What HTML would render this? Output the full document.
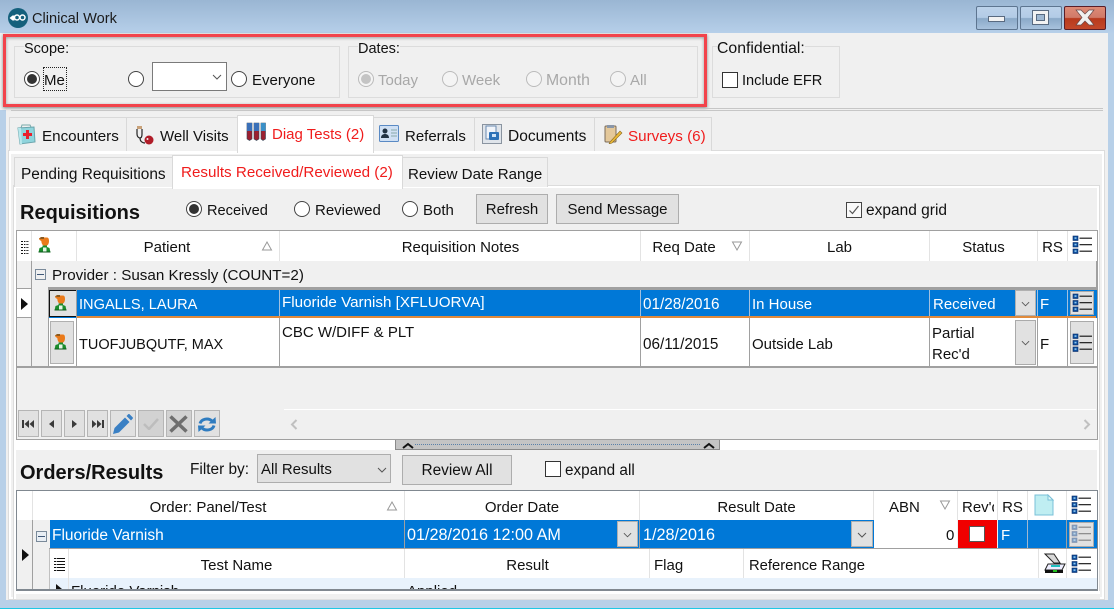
<!DOCTYPE html>
<html><head><meta charset="utf-8"><title>Clinical Work</title>
<style>
html,body{margin:0;padding:0}
body{width:1114px;height:609px;overflow:hidden;position:relative;background:#b8d0e8;font-family:"Liberation Sans",sans-serif;font-size:15px;color:#111}
.a,.t,svg.i{position:absolute;box-sizing:border-box}
.t{white-space:nowrap;line-height:20px;height:20px;margin-top:2px}
.c{text-align:center}
.w{color:#fff}.r{color:#f01c1c}.d{color:#a8a8a8}
.b{font-weight:bold;font-size:20px;color:#111}
.gb{border:1px solid #dcdcdc}
.rd{position:absolute;width:16px;height:16px;border:1px solid #444;border-radius:50%;background:#fff;box-sizing:border-box}
.rd.on::after{content:"";position:absolute;left:2px;top:2px;width:10px;height:10px;border-radius:50%;background:#333}
.rd.dis{border-color:#bbb;background:#f4f4f4}
.rd.dis.on::after{background:#c4c4c4}
.cb{position:absolute;width:16px;height:16px;border:1px solid #333;background:#fff;box-sizing:border-box}
.tab{position:absolute;box-sizing:border-box;background:#f0f0f0;border:1px solid #d9d9d9;border-bottom:none}
.tab.s{background:#fff;border-color:#d9d9d9}
.btn{position:absolute;box-sizing:border-box;background:#e1e1e1;border:1px solid #adadad}
.v{position:absolute;width:1px;background:#e3e3e3}
.vg{position:absolute;width:1px;background:#a0a0a0}
.h{position:absolute;height:1px;background:#a0a0a0}
.nav{position:absolute;top:410px;height:27px;box-sizing:border-box;background:#e1e1e1;border:1px solid #b5b5b5}
</style></head><body>
<svg width="0" height="0" style="position:absolute">
<defs>
<symbol id="p" viewBox="0 0 14 17"><path d="M3 1.500h6.500c1.500 0 2 1.500 2 3.500 0 2.500-1 4.500-2.500 4.500H6.500C5 9.500 4 7.500 3.800 5 2.500 4.500 1.500 3.500 1.500 2.500z" fill="#ea7a1a"/><path d="M1.500 2.500L3.500 1h3v2H4z" fill="#8a5a20"/><path d="M5 9.500h4.500V11l2.500 1 1 4.500H1L2 12l3-1z" fill="#1a8c2c"/><path d="M5.500 11.500h3.500v4H5.500z" fill="#e6f4e6"/><path d="M1 15.500h12v1H1z" fill="#0e5a1c"/></symbol>
<symbol id="l" viewBox="0 0 20 20"><g fill="#0d4f9e" stroke="#0a2c66" stroke-width=".6"><rect x="1" y="1" width="5" height="4.500"/><rect x="1" y="7.500" width="5" height="4.500"/><rect x="1" y="14" width="5" height="4.500"/></g><g fill="#8ec8f0"><rect x="2.500" y="2.300" width="2" height="1.600"/><rect x="2.500" y="8.800" width="2" height="1.600"/><rect x="2.500" y="15.300" width="2" height="1.600"/></g><path d="M7.500 3.200H20M7.500 9.700H20M7.500 16.200H20" stroke="#111" stroke-width="1.100"/></symbol>
<symbol id="ch" viewBox="0 0 10 6"><path d="M1 1l4 4 4-4" fill="none" stroke="#555" stroke-width="1"/></symbol>
</defs></svg>

<!-- title bar -->
<div class="a" style="left:0;top:0;width:1114px;height:33px;background:linear-gradient(#9ab6d3,#b6cfe9)"></div>
<svg class="i" style="left:8px;top:8px" width="20" height="20" viewBox="0 0 20 20"><circle cx="10" cy="10" r="10" fill="#14607c"/><path d="M1.500 10l3-2.500h2v5h-2z" fill="#fff"/><circle cx="9" cy="9.500" r="2.500" fill="none" stroke="#fff" stroke-width="1.500"/><circle cx="14.500" cy="9.500" r="2.500" fill="none" stroke="#fff" stroke-width="1.500"/></svg>
<div class="t" style="left:32px;top:7px;color:#1b1b1b;font-size:14.600px">Clinical Work</div>
<div class="a" style="left:976px;top:6px;width:42px;height:24px;border:1px solid #5d7590;border-radius:2px;background:linear-gradient(#bcd2ea 0,#b2cbe6 48%,#8aa9c8 52%,#a8c2dd 100%)"></div>
<div class="a" style="left:988px;top:16px;width:17px;height:6px;background:#f2f2f2;border:1px solid #596a80"></div>
<div class="a" style="left:1020px;top:6px;width:42px;height:24px;border:1px solid #5d7590;border-radius:2px;background:linear-gradient(#bcd2ea 0,#b2cbe6 48%,#8aa9c8 52%,#a8c2dd 100%)"></div>
<div class="a" style="left:1032px;top:10px;width:17px;height:15px;background:#f2f2f2;border:1px solid #596a80"></div>
<div class="a" style="left:1036px;top:14px;width:9px;height:7px;background:#9fb8d2;border:1px solid #596a80"></div>
<div class="a" style="left:1064px;top:6px;width:42px;height:24px;border:1px solid #5a1e28;border-radius:2px;background:linear-gradient(#de8a76 0,#d07a68 48%,#b8391c 52%,#c2482a 100%)"></div>
<svg class="i" style="left:1075px;top:9px" width="20" height="17" viewBox="0 0 20 17"><path d="M1 1h5l4 4 4-4h5l-6 7.500 6 7.500h-5l-4-4-4 4H1l6-7.500z" fill="#f0f0f0" stroke="#6a4a4a" stroke-width=".7"/></svg>

<!-- main surface -->
<div class="a" style="left:0;top:33px;width:1108px;height:567px;background:#f0f0f0"></div>
<div class="a" style="left:0;top:110px;width:6px;height:490px;background:#b8d0e8"></div>
<div class="a" style="left:0;top:608px;width:1114px;height:1px;background:#1fc8e4"></div>

<!-- scope -->
<div class="a gb" style="left:14px;top:46px;width:326px;height:52px"></div>
<div class="t" style="left:24px;top:37px;background:#f0f0f0;font-size:14.500px;height:18px">Scope:</div>
<div class="rd on" style="left:24px;top:71px"></div>
<div class="a" style="left:43px;top:67px;width:24px;height:24px;border:1px dotted #222"></div>
<div class="t" style="left:44px;top:69px">Me</div>
<div class="rd" style="left:128px;top:71px"></div>
<div class="a" style="left:152px;top:62px;width:75px;height:29px;border:1px solid #7a7a7a;background:#fff"></div>
<svg class="i" style="left:212px;top:74px" width="10" height="6"><use href="#ch"/></svg>
<div class="rd" style="left:231px;top:71px"></div>
<div class="t" style="left:252px;top:69px">Everyone</div>

<!-- dates -->
<div class="a gb" style="left:348px;top:46px;width:350px;height:52px"></div>
<div class="t" style="left:358px;top:37px;background:#f0f0f0;font-size:14.500px;height:18px">Dates:</div>
<div class="rd dis on" style="left:358px;top:71px"></div><div class="t d" style="left:378px;top:69px">Today</div>
<div class="rd dis" style="left:442px;top:71px"></div><div class="t d" style="left:462px;top:69px">Week</div>
<div class="rd dis" style="left:526px;top:71px"></div><div class="t d" style="left:546px;top:69px;font-size:15.800px">Month</div>
<div class="rd dis" style="left:610px;top:71px"></div><div class="t d" style="left:630px;top:69px">All</div>

<!-- red annotation -->
<div class="a" style="left:3px;top:34px;width:704px;height:73px;border:3px solid #f2434b;box-shadow:0 1px 3px rgba(0,0,0,.45),inset 0 1px 3px rgba(0,0,0,.35)"></div>

<!-- confidential -->
<div class="a gb" style="left:712px;top:46px;width:128px;height:52px"></div>
<div class="t" style="left:717px;top:37px;background:#f0f0f0;font-size:15.800px;height:18px">Confidential:</div>
<div class="cb" style="left:722px;top:72px"></div>
<div class="t" style="left:742px;top:69px;font-size:14.600px">Include EFR</div>

<div class="a" style="left:11px;top:108px;width:1092px;height:3px;border:1px solid #c6c6c6;border-left:none;border-right:none"></div>

<!-- outer panel -->
<div class="a" style="left:8px;top:150px;width:1097px;height:450px;border:3px solid #fff;border-top-width:4px;outline:1px solid #dcdcdc;outline-offset:-1px;background:#f0f0f0"></div>

<!-- outer tabs -->
<div class="tab" style="left:9px;top:117px;width:118px;height:34px"></div>
<div class="tab" style="left:126px;top:117px;width:112px;height:34px"></div>
<div class="tab s" style="left:237px;top:115px;width:137px;height:38px"></div>
<div class="tab" style="left:373px;top:117px;width:102px;height:34px"></div>
<div class="tab" style="left:474px;top:117px;width:121px;height:34px"></div>
<div class="tab" style="left:594px;top:117px;width:118px;height:34px"></div>

<svg class="i" style="left:17px;top:124px" width="19" height="21" viewBox="0 0 19 21"><path d="M4 4l1-3h8l1 2" fill="none" stroke="#7aa" stroke-width="1"/><path d="M1 4l16-1 1 15L3 20z" fill="#8fd4dc" stroke="#6aa4ac"/><path d="M1 4l3 0 1 16H3z" fill="#b8e8ec"/><path d="M9 6h3v3h3v3h-3v3H9v-3H6V9h3z" fill="#e8202c"/></svg>
<div class="t" style="left:42px;top:125px;font-size:15.200px">Encounters</div>
<svg class="i" style="left:134px;top:125px" width="21" height="20" viewBox="0 0 21 20"><path d="M3 4v5c0 3 2 4 3 4s2-1 2-4V4M6 13c0 3 2 5 5 5" fill="none" stroke="#222" stroke-width="1.200"/><rect x="3" y="1" width="5" height="3" fill="#c9a27a"/><circle cx="15" cy="15" r="4.500" fill="#b01c28"/><circle cx="13.500" cy="14" r="1" fill="#eee"/></svg>
<div class="t" style="left:160px;top:125px">Well Visits</div>
<svg class="i" style="left:246px;top:122px" width="20" height="19" viewBox="0 0 20 19"><g stroke="#345" stroke-width=".6"><path d="M1 1h5v16l-2.500 1.500L1 17z" fill="#9c2030"/><path d="M8 1h5v16l-2.500 1.500L8 17z" fill="#9c2030"/><path d="M15 1h4.500v16L17 18.500 15 17z" fill="#9c2030"/></g><rect x="1" y="1" width="5" height="8" fill="#3a70b8"/><rect x="8" y="1" width="5" height="8" fill="#3a70b8"/><rect x="15" y="1" width="4.500" height="8" fill="#3a90c8"/></svg>
<div class="t r" style="left:272px;top:123px;font-size:15px">Diag Tests (2)</div>
<svg class="i" style="left:379px;top:125px" width="20" height="17" viewBox="0 0 20 17"><rect x=".5" y=".5" width="19" height="16" rx="1" fill="#cfe0f4" stroke="#5a8ac4"/><circle cx="6" cy="6" r="2.500" fill="#234"/><path d="M2 13c0-3 2-4 4-4s4 1 4 4z" fill="#234"/><path d="M12 5h6M12 8h6M12 11h6" stroke="#8aa" stroke-width="1"/></svg>
<div class="t" style="left:405px;top:125px">Referrals</div>
<svg class="i" style="left:482px;top:124px" width="20" height="20" viewBox="0 0 20 20"><rect x=".5" y=".5" width="19" height="19" fill="#dfe4ea" stroke="#8a94a0"/><rect x="4" y="2" width="10" height="13" fill="#f0f4fa" stroke="#6a8ab0"/><rect x="7" y="8" width="10" height="8" rx="1" fill="#2d72b8"/><rect x="10" y="10" width="4" height="3" fill="#cfe4f8"/></svg>
<div class="t" style="left:508px;top:125px;font-size:15.500px">Documents</div>
<svg class="i" style="left:604px;top:124px" width="20" height="20" viewBox="0 0 20 20"><rect x="1" y="2" width="11" height="16" rx="1" fill="#e4c89a" stroke="#7a6a58"/><rect x="3" y="1" width="7" height="3" fill="#8a96a8"/><path d="M6 18L16 7l2 2L8 19l-3 1z" fill="#eab838" stroke="#8a6a20" stroke-width=".6"/></svg>
<div class="t r" style="left:628px;top:125px;font-size:15.200px">Surveys (6)</div>

<!-- inner panel -->
<div class="a" style="left:13px;top:185px;width:1087px;height:415px;border:3px solid #fff;outline:1px solid #dcdcdc;outline-offset:-1px;background:#f0f0f0"></div>
<div class="tab" style="left:14px;top:157px;width:159px;height:30px"></div>
<div class="tab s" style="left:172px;top:155px;width:231px;height:34px"></div>
<div class="tab" style="left:402px;top:157px;width:146px;height:30px"></div>
<div class="t" style="left:21px;top:163px;font-size:15.400px">Pending Requisitions</div>
<div class="t r" style="left:181px;top:161px;font-size:15.200px">Results Received/Reviewed (2)</div>
<div class="t" style="left:408px;top:163px;font-size:15.100px">Review Date Range</div>

<!-- requisitions toolbar -->
<div class="t b" style="left:20px;top:201px">Requisitions</div>
<div class="rd on" style="left:186px;top:201px"></div><div class="t" style="left:207px;top:199px;font-size:14.600px">Received</div>
<div class="rd" style="left:294px;top:201px"></div><div class="t" style="left:315px;top:199px">Reviewed</div>
<div class="rd" style="left:402px;top:201px"></div><div class="t" style="left:423px;top:199px">Both</div>
<div class="btn" style="left:476px;top:194px;width:72px;height:30px"></div><div class="t c" style="left:476px;top:198px;width:72px">Refresh</div>
<div class="btn" style="left:556px;top:194px;width:123px;height:30px"></div><div class="t c" style="left:556px;top:198px;width:123px">Send Message</div>
<div class="a" style="left:846px;top:202px;width:16px;height:16px;border:1px solid #444;background:#fafafa"></div>
<svg class="i" style="left:848px;top:204px" width="12" height="12"><path d="M1.500 6.500l3 3 6-7.500" fill="none" stroke="#555" stroke-width="1.200"/></svg>
<div class="t" style="left:866px;top:199px;font-size:15.500px">expand grid</div>

<!-- grid 1 -->
<div class="a" style="left:16px;top:230px;width:1082px;height:210px;border:1px solid #a0a0a0;background:#f0f0f0"></div>
<div class="a" style="left:17px;top:231px;width:1080px;height:30px;background:#fff"></div>
<div class="v" style="left:31px;top:231px;height:30px"></div>
<div class="v" style="left:76px;top:231px;height:30px"></div>
<div class="v" style="left:279px;top:231px;height:30px"></div>
<div class="v" style="left:640px;top:231px;height:30px"></div>
<div class="v" style="left:749px;top:231px;height:30px"></div>
<div class="v" style="left:929px;top:231px;height:30px"></div>
<div class="v" style="left:1037px;top:231px;height:30px"></div>
<div class="v" style="left:1067px;top:231px;height:30px"></div>
<svg class="i" style="left:21px;top:241px" width="8" height="13"><g fill="#111"><rect y="0" width="2" height="1"/><rect y="3" width="2" height="1"/><rect y="6" width="2" height="1"/><rect y="9" width="2" height="1"/><rect y="12" width="2" height="1"/></g><path d="M3 .5h5M3 3.500h5M3 6.500h5M3 9.500h5M3 12.500h5" stroke="#111" stroke-dasharray="1 .6"/></svg>
<svg class="i" style="left:37px;top:236px" width="15" height="17"><use href="#p"/></svg>
<div class="t c" style="left:77px;top:236px;width:180px">Patient</div>
<svg class="i" style="left:261px;top:240px" width="12" height="12"><path d="M6 2l4.500 8h-9z" fill="#fff" stroke="#999"/></svg>
<div class="t c" style="left:280px;top:236px;width:361px">Requisition Notes</div>
<div class="t c" style="left:641px;top:236px;width:86px">Req Date</div>
<svg class="i" style="left:731px;top:240px" width="12" height="12"><path d="M6 10l4.500-8h-9z" fill="#fff" stroke="#999"/></svg>
<div class="t c" style="left:750px;top:236px;width:179px">Lab</div>
<div class="t c" style="left:930px;top:236px;width:107px">Status</div>
<div class="t c" style="left:1038px;top:236px;width:29px">RS</div>
<svg class="i" style="left:1072px;top:235px" width="20" height="20"><use href="#l"/></svg>

<!-- group row -->
<div class="t" style="left:52px;top:264px;font-size:15.200px">Provider : Susan Kressly (COUNT=2)</div>
<div class="a" style="left:35px;top:269px;width:11px;height:11px;border:1px solid #7a8a9a;background:#f0f0f0"></div>
<div class="a" style="left:37px;top:274px;width:7px;height:1px;background:#405878"></div>
<div class="a" style="left:1096px;top:261px;width:1px;height:106px;background:#a0a0a0"></div>

<div class="a" style="left:17px;top:288px;width:15px;height:30px;background:#fff;border-top:1px solid #a0a0a0;border-bottom:1px solid #a0a0a0"></div>
<svg class="i" style="left:21px;top:298px" width="8" height="12"><path d="M0 0l7 6-7 6z" fill="#111"/></svg>
<div class="vg" style="left:31px;top:261px;height:106px"></div>

<!-- row 1 -->
<div class="a" style="left:48px;top:287px;width:1049px;height:31px;background:#0078d7;border-top:3px solid #a0a0a0"></div>
<div class="a" style="left:77px;top:316px;width:1019px;height:2px;background:#e08a3c"></div>
<div class="a" style="left:49px;top:290px;width:28px;height:27px;background:#e1e1e1;border:1px solid #111"></div>
<svg class="i" style="left:53px;top:294px" width="15" height="17"><use href="#p"/></svg>
<div class="t w" style="left:79px;top:293px;font-size:14.600px">INGALLS, LAURA</div>
<div class="t w" style="left:282px;top:291px;font-size:15.200px">Fluoride Varnish [XFLUORVA]</div>
<div class="t w" style="left:643px;top:293px;font-size:15.300px">01/28/2016</div>
<div class="t w" style="left:752px;top:293px">In House</div>
<div class="t w" style="left:933px;top:293px">Received</div>
<div class="a" style="left:1015px;top:290px;width:21px;height:26px;background:#e1e1e1;border:1px solid #b0b0b0"></div>
<svg class="i" style="left:1021px;top:301px" width="9" height="6"><use href="#ch"/></svg>
<div class="t w" style="left:1040px;top:293px">F</div>
<div class="a" style="left:1070px;top:291px;width:24px;height:24px;background:#e1e1e1;border:1px solid #aaa"></div>
<svg class="i" style="left:1072px;top:293px" width="20" height="20"><use href="#l"/></svg>
<div class="a" style="left:279px;top:290px;width:1px;height:26px;background:#a0c0e0"></div>
<div class="a" style="left:640px;top:290px;width:1px;height:26px;background:#a0c0e0"></div>
<div class="a" style="left:749px;top:290px;width:1px;height:26px;background:#a0c0e0"></div>
<div class="a" style="left:929px;top:290px;width:1px;height:26px;background:#a0c0e0"></div>
<div class="a" style="left:1037px;top:290px;width:1px;height:26px;background:#a0c0e0"></div>
<div class="a" style="left:1067px;top:290px;width:1px;height:26px;background:#a0c0e0"></div>

<!-- row 2 -->
<div class="a" style="left:48px;top:318px;width:1049px;height:48px;background:#fff"></div>
<div class="a" style="left:50px;top:321px;width:24px;height:43px;background:#e1e1e1;border:1px solid #b0b0b0"></div>
<svg class="i" style="left:53px;top:333px" width="15" height="17"><use href="#p"/></svg>
<div class="t" style="left:79px;top:333px;font-size:14.500px">TUOFJUBQUTF, MAX</div>
<div class="t" style="left:282px;top:321px">CBC W/DIFF &amp; PLT</div>
<div class="t" style="left:643px;top:333px;font-size:15.300px">06/11/2015</div>
<div class="t" style="left:752px;top:333px">Outside Lab</div>
<div class="t" style="left:932px;top:322px">Partial</div>
<div class="t" style="left:932px;top:343px">Rec'd</div>
<div class="a" style="left:1015px;top:320px;width:21px;height:45px;background:#e1e1e1;border:1px solid #aaa"></div>
<svg class="i" style="left:1021px;top:340px" width="9" height="6"><use href="#ch"/></svg>
<div class="t" style="left:1040px;top:333px">F</div>
<div class="a" style="left:1070px;top:321px;width:24px;height:43px;background:#e1e1e1;border:1px solid #aaa"></div>
<svg class="i" style="left:1072px;top:333px" width="20" height="20"><use href="#l"/></svg>
<div class="vg" style="left:48px;top:288px;height:79px"></div>
<div class="vg" style="left:76px;top:288px;height:79px"></div>
<div class="vg" style="left:279px;top:318px;height:48px"></div>
<div class="vg" style="left:640px;top:318px;height:48px"></div>
<div class="vg" style="left:749px;top:318px;height:48px"></div>
<div class="vg" style="left:929px;top:318px;height:48px"></div>
<div class="vg" style="left:1037px;top:318px;height:48px"></div>
<div class="vg" style="left:1067px;top:318px;height:48px"></div>
<div class="a" style="left:17px;top:366px;width:1080px;height:2px;background:#a0a0a0"></div>

<!-- nav -->
<div class="nav" style="left:18px;width:21px"></div>
<div class="nav" style="left:41px;width:21px"></div>
<div class="nav" style="left:64px;width:21px"></div>
<div class="nav" style="left:87px;width:21px"></div>
<div class="nav" style="left:110px;width:26px"></div>
<div class="nav" style="left:138px;width:26px;background:#d2d2d2"></div>
<div class="nav" style="left:166px;width:26px;background:#d2d2d2"></div>
<div class="nav" style="left:194px;width:26px"></div>
<svg class="i" style="left:22px;top:420px" width="12" height="8"><path d="M0 0h2v8H0zM7 0v8L2.500 4zM12 0v8L7.500 4z" fill="#3a3a3a"/></svg>
<svg class="i" style="left:49px;top:420px" width="5" height="8"><path d="M5 0v8L0 4z" fill="#3a3a3a"/></svg>
<svg class="i" style="left:72px;top:420px" width="5" height="8"><path d="M0 0v8l5-4z" fill="#3a3a3a"/></svg>
<svg class="i" style="left:92px;top:420px" width="12" height="8"><path d="M0 0v8l4.500-4zM5 0v8l4.500-4zM10 0h2v8h-2z" fill="#3a3a3a"/></svg>
<svg class="i" style="left:113px;top:414px" width="20" height="20" viewBox="0 0 20 20"><path d="M0 20l1.500-6L12 3.500 16.500 8 6 18.500z" fill="#3a80c4"/><path d="M13.500 2l1.700-1.700a1 1 0 0 1 1.400 0l3 3a1 1 0 0 1 0 1.400L18 6.500z" fill="#3a80c4"/></svg>
<svg class="i" style="left:143px;top:417px" width="16" height="13"><path d="M1 7l5 5 9-10" fill="none" stroke="#bdbdbd" stroke-width="2.500"/></svg>
<svg class="i" style="left:169px;top:415px" width="19" height="18"><path d="M1.500 1.500l16 15M17.500 1.500l-16 15" stroke="#6e6e6e" stroke-width="3.500"/></svg>
<svg class="i" style="left:197px;top:416px" width="20" height="17" viewBox="0 0 20 17"><path d="M3 7.500A7 6 0 0 1 15 5" fill="none" stroke="#2f7cc0" stroke-width="3"/><path d="M11.500 7.500H19l-.5-6.500z" fill="#2f7cc0"/><path d="M17 9.500A7 6 0 0 1 5 12" fill="none" stroke="#2f7cc0" stroke-width="3"/><path d="M8.500 9.500H1l.5 6.500z" fill="#2f7cc0"/></svg>
<div class="a" style="left:284px;top:409px;width:812px;height:1px;background:#fff"></div>
<svg class="i" style="left:290px;top:419px" width="8" height="11"><path d="M6.500 1L2 5.500 6.500 10" fill="none" stroke="#c0c0c0" stroke-width="2"/></svg>
<svg class="i" style="left:1083px;top:419px" width="8" height="11"><path d="M1.500 1L6 5.500 1.500 10" fill="none" stroke="#c0c0c0" stroke-width="2"/></svg>

<!-- splitter -->
<div class="a" style="left:16px;top:440px;width:1083px;height:10px;background:#fff"></div>
<div class="a" style="left:395px;top:440px;width:325px;height:10px;background:#c4c4c4;border:1px solid #8a8a8a;border-top:none"></div>
<div class="a" style="left:415px;top:444px;width:285px;height:1px;border-top:1px dotted #5a80a8"></div>
<svg class="i" style="left:402px;top:442px" width="12" height="7"><path d="M1 6l5-4 5 4" fill="none" stroke="#111" stroke-width="2"/></svg>
<svg class="i" style="left:703px;top:442px" width="12" height="7"><path d="M1 6l5-4 5 4" fill="none" stroke="#111" stroke-width="2"/></svg>

<!-- orders toolbar -->
<div class="t b" style="left:20px;top:461px">Orders/Results</div>
<div class="t" style="left:190px;top:458px;font-size:15.400px">Filter by:</div>
<div class="a" style="left:257px;top:454px;width:134px;height:29px;background:#e1e1e1;border:1px solid #adadad"></div>
<div class="t" style="left:261px;top:458px">All Results</div>
<svg class="i" style="left:377px;top:467px" width="10" height="6"><use href="#ch"/></svg>
<div class="btn" style="left:402px;top:455px;width:110px;height:30px"></div><div class="t c" style="left:402px;top:459px;width:110px;font-size:15.400px">Review All</div>
<div class="cb" style="left:545px;top:461px"></div>
<div class="t" style="left:565px;top:459px;font-size:15.300px">expand all</div>

<!-- grid 2 -->
<div class="a" style="left:16px;top:490px;width:1082px;height:101px;border:1px solid #808890;border-bottom:2px solid #808890;background:#f0f0f0;overflow:hidden"></div>
<div class="a" style="left:17px;top:491px;width:1080px;height:29px;background:#fff"></div>
<div class="v" style="left:32px;top:491px;height:29px"></div>
<div class="v" style="left:404px;top:491px;height:29px"></div>
<div class="v" style="left:639px;top:491px;height:29px"></div>
<div class="v" style="left:873px;top:491px;height:29px"></div>
<div class="v" style="left:957px;top:491px;height:29px"></div>
<div class="v" style="left:997px;top:491px;height:29px"></div>
<div class="v" style="left:1027px;top:491px;height:29px"></div>
<div class="v" style="left:1066px;top:491px;height:29px"></div>
<div class="t c" style="left:33px;top:496px;width:350px">Order: Panel/Test</div>
<svg class="i" style="left:386px;top:500px" width="12" height="12"><path d="M6 2l4.500 8h-9z" fill="#fff" stroke="#999"/></svg>
<div class="t c" style="left:405px;top:496px;width:234px">Order Date</div>
<div class="t c" style="left:640px;top:496px;width:233px">Result Date</div>
<div class="t" style="left:889px;top:496px">ABN</div>
<svg class="i" style="left:939px;top:499px" width="12" height="12"><path d="M6 10l4.500-8h-9z" fill="#fff" stroke="#999"/></svg>
<div class="t" style="left:962px;top:496px;width:32px;overflow:hidden">Rev'd</div>
<div class="t c" style="left:998px;top:496px;width:29px">RS</div>
<svg class="i" style="left:1034px;top:494px" width="20" height="22" viewBox="0 0 20 22"><path d="M1 1h13l5 5v15H1z" fill="#bfeef2" stroke="#7ac0d8"/><path d="M14 1v5h5z" fill="#e4fafa" stroke="#7ac0d8"/></svg>
<svg class="i" style="left:1071px;top:495px" width="20" height="20"><use href="#l"/></svg>

<!-- row -->
<div class="a" style="left:17px;top:520px;width:15px;height:70px;background:#f0f0f0"></div>
<div class="a" style="left:32px;top:520px;width:1px;height:69px;background:#a0a0a0"></div>
<svg class="i" style="left:22px;top:549px" width="8" height="12"><path d="M0 0l7 6-7 6z" fill="#111"/></svg>
<div class="a" style="left:36px;top:531px;width:11px;height:11px;border:1px solid #7a8a9a;background:#e8eef4"></div>
<div class="a" style="left:38px;top:536px;width:7px;height:1px;background:#405878"></div>
<div class="a" style="left:50px;top:520px;width:824px;height:28px;background:#0078d7"></div>
<div class="a" style="left:874px;top:520px;width:83px;height:28px;background:#fff"></div>
<div class="a" style="left:958px;top:520px;width:39px;height:28px;background:#f00000"></div>
<div class="a" style="left:998px;top:520px;width:99px;height:28px;background:#0078d7"></div>
<div class="t w" style="left:52px;top:524px;font-size:15.500px">Fluoride Varnish</div>
<div class="t w" style="left:407px;top:523px;font-size:16.200px">01/28/2016 12:00 AM</div>
<div class="a" style="left:404px;top:520px;width:1px;height:28px;background:#a0a0a0"></div>
<div class="a" style="left:639px;top:520px;width:1px;height:28px;background:#a0a0a0"></div>
<div class="a" style="left:617px;top:521px;width:21px;height:26px;background:#e1e1e1;border:1px solid #b0b0b0"></div>
<svg class="i" style="left:623px;top:532px" width="9" height="6"><use href="#ch"/></svg>
<div class="t w" style="left:643px;top:523px;font-size:16.200px">1/28/2016</div>
<div class="a" style="left:851px;top:521px;width:22px;height:26px;background:#e1e1e1;border:1px solid #b0b0b0"></div>
<svg class="i" style="left:857px;top:532px" width="10" height="6"><use href="#ch"/></svg>
<div class="t" style="left:946px;top:524px">0</div>
<div class="a" style="left:969px;top:526px;width:16px;height:16px;background:#fff;border:1px solid #555"></div>
<div class="t w" style="left:1001px;top:524px">F</div>
<div class="a" style="left:1027px;top:520px;width:1px;height:28px;background:#a0b8d0"></div>
<div class="a" style="left:1066px;top:520px;width:1px;height:28px;background:#a0a0a0"></div>
<div class="a" style="left:1069px;top:522px;width:25px;height:25px;background:#e1e1e1;border:1px solid #aaa"></div>
<svg class="i" style="left:1071px;top:524px;opacity:.45" width="20" height="20"><use href="#l"/></svg>
<div class="a" style="left:49px;top:548px;width:1048px;height:1px;background:#a0a0a0"></div>

<!-- subgrid -->
<div class="a" style="left:50px;top:549px;width:1047px;height:29px;background:#fff"></div>
<div class="a" style="left:50px;top:578px;width:1047px;height:11px;background:#e8f2fc;overflow:hidden">
  <div class="t" style="left:21px;top:2px">Fluoride Varnish</div>
  <div class="t" style="left:357px;top:2px">Applied</div>
  <svg class="i" style="left:6px;top:6px" width="7" height="10"><path d="M0 0l6 5-6 5z" fill="#111"/></svg>
</div>
<div class="a" style="left:49px;top:549px;width:1px;height:40px;background:#c0c0c0"></div>
<div class="v" style="left:68px;top:549px;height:40px"></div>
<div class="v" style="left:404px;top:549px;height:29px"></div>
<div class="v" style="left:649px;top:549px;height:29px"></div>
<div class="v" style="left:743px;top:549px;height:29px"></div>
<div class="v" style="left:1038px;top:549px;height:29px"></div>
<div class="v" style="left:1066px;top:549px;height:29px"></div>
<svg class="i" style="left:54px;top:558px" width="11" height="14"><path d="M0 .5h11M0 3.500h11M0 6.500h11M0 9.500h11M0 12.500h11" stroke="#111" stroke-dasharray="2 .6 8.400 0"/></svg>
<div class="t c" style="left:69px;top:554px;width:335px">Test Name</div>
<div class="t c" style="left:405px;top:554px;width:245px">Result</div>
<div class="t" style="left:654px;top:554px">Flag</div>
<div class="t" style="left:749px;top:554px;font-size:14.800px">Reference Range</div>
<svg class="i" style="left:1043px;top:552px" width="23" height="23" viewBox="0 0 23 23"><path d="M2 2h9l6 9-6 0z" fill="#d8d8d8" stroke="#222"/><path d="M5 12h17l-3 6H2z" fill="#eef" stroke="#222"/><path d="M8 14h9" stroke="#20c0c0" stroke-width="2"/><rect x="2" y="18" width="18" height="3" fill="#111"/><rect x="10" y="18" width="4" height="2" fill="#20c020"/></svg>
<svg class="i" style="left:1071px;top:554px" width="20" height="20"><use href="#l"/></svg>
<div class="a" style="left:16px;top:589px;width:1082px;height:2px;background:#808890"></div>
<div class="a" style="left:16px;top:591px;width:1084px;height:9px;background:#f0f0f0;border-top:3px solid #fff;border-bottom:1px solid #e0e0e0"></div>
</body></html>
